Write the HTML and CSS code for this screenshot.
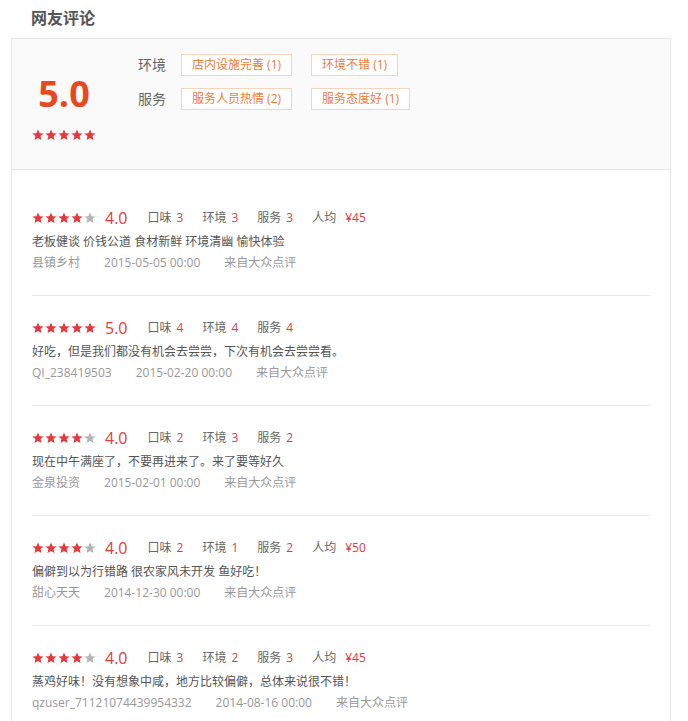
FILE: index.html
```html
<!DOCTYPE html>
<html lang="zh-CN">
<head>
<meta charset="utf-8">
<title>网友评论</title>
<link rel="stylesheet" href="styles.css">
</head>
<body>
<svg class="defs" width="0" height="0" aria-hidden="true">
  <defs>
    <symbol id="star" viewBox="0 0 24 24">
      <polygon points="12,1 15.2,8.4 23.2,9 17.1,14.2 19,22 12,17.8 5,22 6.9,14.2 0.8,9 8.8,8.4"/>
    </symbol>
  </defs>
</svg>
<div class="page">
  <h2 class="title">网友评论</h2>
  <div class="box">
    <div class="summary">
      <div class="score-col">
        <div class="big-score">5.0</div>
        <svg class="stars" width="64" height="12" viewBox="0 0 64 12">
          <use href="#star" x="0" y="0" width="12" height="12" class="on"/>
          <use href="#star" x="13" y="0" width="12" height="12" class="on"/>
          <use href="#star" x="26" y="0" width="12" height="12" class="on"/>
          <use href="#star" x="39" y="0" width="12" height="12" class="on"/>
          <use href="#star" x="52" y="0" width="12" height="12" class="on"/>
        </svg>
      </div>
      <div class="tags-col">
        <div class="tag-row">
          <span class="tag-label">环境</span>
          <span class="tag">店内设施完善 (1)</span>
          <span class="tag">环境不错 (1)</span>
        </div>
        <div class="tag-row">
          <span class="tag-label">服务</span>
          <span class="tag">服务人员热情 (2)</span>
          <span class="tag">服务态度好 (1)</span>
        </div>
      </div>
    </div>

    <div class="reviews">
      <div class="review">
        <div class="r-head">
          <svg class="stars" width="64" height="12" viewBox="0 0 64 12">
            <use href="#star" x="0" width="12" height="12" class="on"/>
            <use href="#star" x="13" width="12" height="12" class="on"/>
            <use href="#star" x="26" width="12" height="12" class="on"/>
            <use href="#star" x="39" width="12" height="12" class="on"/>
            <use href="#star" x="52" width="12" height="12" class="off"/>
          </svg>
          <span class="r-score">4.0</span>
          <span class="r-item">口味<em>3</em></span>
          <span class="r-item">环境<em>3</em></span>
          <span class="r-item">服务<em>3</em></span>
          <span class="r-item">人均<em class="price">¥45</em></span>
        </div>
        <div class="r-text">老板健谈 价钱公道 食材新鲜 环境清幽 愉快体验</div>
        <div class="r-meta"><span>县镇乡村</span><span>2015-05-05 00:00</span><span>来自大众点评</span></div>
      </div>

      <div class="review">
        <div class="r-head">
          <svg class="stars" width="64" height="12" viewBox="0 0 64 12">
            <use href="#star" x="0" width="12" height="12" class="on"/>
            <use href="#star" x="13" width="12" height="12" class="on"/>
            <use href="#star" x="26" width="12" height="12" class="on"/>
            <use href="#star" x="39" width="12" height="12" class="on"/>
            <use href="#star" x="52" width="12" height="12" class="on"/>
          </svg>
          <span class="r-score">5.0</span>
          <span class="r-item">口味<em>4</em></span>
          <span class="r-item">环境<em>4</em></span>
          <span class="r-item">服务<em>4</em></span>
        </div>
        <div class="r-text">好吃，但是我们都没有机会去尝尝，下次有机会去尝尝看。</div>
        <div class="r-meta"><span>QI_238419503</span><span>2015-02-20 00:00</span><span>来自大众点评</span></div>
      </div>

      <div class="review">
        <div class="r-head">
          <svg class="stars" width="64" height="12" viewBox="0 0 64 12">
            <use href="#star" x="0" width="12" height="12" class="on"/>
            <use href="#star" x="13" width="12" height="12" class="on"/>
            <use href="#star" x="26" width="12" height="12" class="on"/>
            <use href="#star" x="39" width="12" height="12" class="on"/>
            <use href="#star" x="52" width="12" height="12" class="off"/>
          </svg>
          <span class="r-score">4.0</span>
          <span class="r-item">口味<em>2</em></span>
          <span class="r-item">环境<em>3</em></span>
          <span class="r-item">服务<em>2</em></span>
        </div>
        <div class="r-text">现在中午满座了，不要再进来了。来了要等好久</div>
        <div class="r-meta"><span>金泉投资</span><span>2015-02-01 00:00</span><span>来自大众点评</span></div>
      </div>

      <div class="review">
        <div class="r-head">
          <svg class="stars" width="64" height="12" viewBox="0 0 64 12">
            <use href="#star" x="0" width="12" height="12" class="on"/>
            <use href="#star" x="13" width="12" height="12" class="on"/>
            <use href="#star" x="26" width="12" height="12" class="on"/>
            <use href="#star" x="39" width="12" height="12" class="on"/>
            <use href="#star" x="52" width="12" height="12" class="off"/>
          </svg>
          <span class="r-score">4.0</span>
          <span class="r-item">口味<em>2</em></span>
          <span class="r-item">环境<em>1</em></span>
          <span class="r-item">服务<em>2</em></span>
          <span class="r-item">人均<em class="price">¥50</em></span>
        </div>
        <div class="r-text">偏僻到以为行错路 很农家风未开发 鱼好吃！</div>
        <div class="r-meta"><span>甜心天天</span><span>2014-12-30 00:00</span><span>来自大众点评</span></div>
      </div>

      <div class="review">
        <div class="r-head">
          <svg class="stars" width="64" height="12" viewBox="0 0 64 12">
            <use href="#star" x="0" width="12" height="12" class="on"/>
            <use href="#star" x="13" width="12" height="12" class="on"/>
            <use href="#star" x="26" width="12" height="12" class="on"/>
            <use href="#star" x="39" width="12" height="12" class="on"/>
            <use href="#star" x="52" width="12" height="12" class="off"/>
          </svg>
          <span class="r-score">4.0</span>
          <span class="r-item">口味<em>3</em></span>
          <span class="r-item">环境<em>2</em></span>
          <span class="r-item">服务<em>3</em></span>
          <span class="r-item">人均<em class="price">¥45</em></span>
        </div>
        <div class="r-text">蒸鸡好味！没有想象中咸，地方比较偏僻，总体来说很不错！</div>
        <div class="r-meta"><span>qzuser_71121074439954332</span><span>2014-08-16 00:00</span><span>来自大众点评</span></div>
      </div>
    </div>
  </div>
</div>
</body>
</html>
```

FILE: styles.css
```css
* { box-sizing: border-box; }
html, body {
  margin: 0;
  padding: 0;
  background: #fff;
}
body {
  font-family: "Open Sans", "Noto Sans CJK SC", sans-serif;
  font-size: 12px;
  color: #666;
}
.defs { position: absolute; width: 0; height: 0; overflow: hidden; }

.page {
  padding-left: 11px;
  width: 671px;
}
.title {
  margin: 0;
  height: 38px;
  line-height: 37px;
  padding-left: 20px;
  font-size: 16px;
  font-weight: bold;
  color: #555;
}
.box {
  border: 1px solid #e6e6e6;
  border-bottom: none;
  width: 660px;
}

.summary {
  display: flex;
  height: 131px;
  background: #fafafa;
  border-bottom: 1px solid #e6e6e6;
  padding-left: 20px;
}
.score-col {
  width: 64px;
  margin-right: 42px;
  padding-top: 35px;
  display: flex;
  flex-direction: column;
  align-items: center;
}
.big-score {
  font-size: 36px;
  font-weight: bold;
  line-height: 40px;
  color: #e8481d;
}
.score-col .stars { margin-top: 15px; }
.stars { display: block; }
.stars .on { fill: #e4393c; }
.stars .off { fill: #b5b5b5; }

.tags-col {
  padding-top: 15px;
  display: flex;
  flex-direction: column;
  gap: 12px;
}
.tag-row {
  display: flex;
  align-items: center;
  height: 22px;
}
.tag-label {
  font-size: 14px;
  line-height: 22px;
  color: #666;
  margin-right: 15px;
}
.tag {
  height: 22px;
  line-height: 20px;
  padding: 0 10px;
  border: 1px solid #f6d3bd;
  background: #fff;
  color: #f07c35;
  font-size: 12px;
  margin-right: 19px;
}

.reviews {
  padding: 16px 20px 0 20px;
}
.review {
  padding: 22px 0 22px;
  border-bottom: 1px solid #e8e8e8;
}
.review:last-child { border-bottom: none; }
.r-head {
  display: flex;
  align-items: center;
  height: 20px;
}
.r-score {
  margin-left: 9px;
  margin-right: 20px;
  font-size: 16px;
  line-height: 20px;
  color: #e4393c;
}
.r-item {
  line-height: 20px;
  color: #666;
  margin-right: 19px;
}
.r-item em {
  font-style: normal;
  color: #e4393c;
  margin-left: 5px;
}
.r-item em.price { margin-left: 9px; }
.r-text {
  margin-top: 4px;
  line-height: 20px;
  color: #555;
}
.r-meta {
  margin-top: 1px;
  line-height: 20px;
  color: #999;
}
.r-meta span { margin-right: 24px; }
```
